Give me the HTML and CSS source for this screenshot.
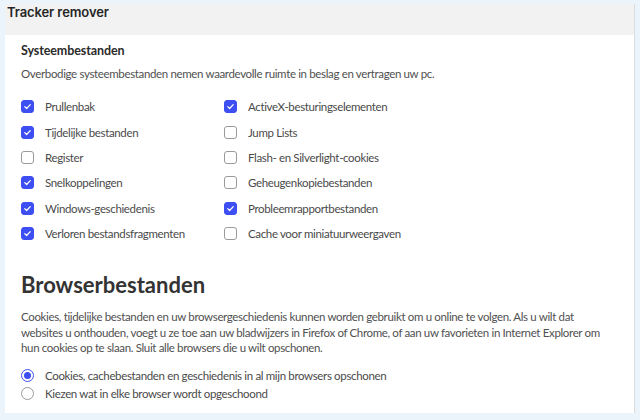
FILE: index.html
```html
<!DOCTYPE html>
<html lang="nl">
<head>
<meta charset="utf-8">
<title>Tracker remover</title>
<link rel="stylesheet" href="styles.css">
</head>
<body>
<div class="panel">
  <div class="panel-header"><h1 class="panel-title">Tracker remover</h1></div>
  <div class="panel-body">
    <section class="group">
      <h2 class="group-title">Systeembestanden</h2>
      <p class="group-desc">Overbodige systeembestanden nemen waardevolle ruimte in beslag en vertragen uw pc.</p>
      <div class="check-grid">
        <label class="check"><span class="box on"><svg viewBox="0 0 14 14"><path d="M3.5 7.2l2.4 2.4 4.6-5"/></svg></span>Prullenbak</label>
        <label class="check"><span class="box on"><svg viewBox="0 0 14 14"><path d="M3.5 7.2l2.4 2.4 4.6-5"/></svg></span>ActiveX-besturingselementen</label>
        <label class="check"><span class="box on"><svg viewBox="0 0 14 14"><path d="M3.5 7.2l2.4 2.4 4.6-5"/></svg></span>Tijdelijke bestanden</label>
        <label class="check"><span class="box"></span>Jump Lists</label>
        <label class="check"><span class="box"></span>Register</label>
        <label class="check"><span class="box"></span>Flash- en Silverlight-cookies</label>
        <label class="check"><span class="box on"><svg viewBox="0 0 14 14"><path d="M3.5 7.2l2.4 2.4 4.6-5"/></svg></span>Snelkoppelingen</label>
        <label class="check"><span class="box"></span>Geheugenkopiebestanden</label>
        <label class="check"><span class="box on"><svg viewBox="0 0 14 14"><path d="M3.5 7.2l2.4 2.4 4.6-5"/></svg></span>Windows-geschiedenis</label>
        <label class="check"><span class="box on"><svg viewBox="0 0 14 14"><path d="M3.5 7.2l2.4 2.4 4.6-5"/></svg></span>Probleemrapportbestanden</label>
        <label class="check"><span class="box on"><svg viewBox="0 0 14 14"><path d="M3.5 7.2l2.4 2.4 4.6-5"/></svg></span>Verloren bestandsfragmenten</label>
        <label class="check"><span class="box"></span>Cache voor miniatuurweergaven</label>
      </div>
    </section>
    <section class="group browsers">
      <h2 class="big-title">Browserbestanden</h2>
      <p class="browser-desc">Cookies, tijdelijke bestanden en uw browsergeschiedenis kunnen worden gebruikt om u online te volgen. Als u wilt dat websites u onthouden, voegt u ze toe aan uw bladwijzers in Firefox of Chrome, of aan uw favorieten in Internet Explorer om hun cookies op te slaan. Sluit alle browsers die u wilt opschonen.</p>
      <div class="radio-list">
        <label class="radio"><span class="dot on"></span>Cookies, cachebestanden en geschiedenis in al mijn browsers opschonen</label>
        <label class="radio"><span class="dot"></span>Kiezen wat in elke browser wordt opgeschoond</label>
      </div>
    </section>
  </div>
</div>
</body>
</html>
```

FILE: styles.css
```css
html, body {
  margin: 0;
  padding: 0;
}

body {
  background: #ebf3fb;
  font-family: Lato, "Noto Sans", sans-serif;
  color: #4a4a4a;
  width: 640px;
  height: 420px;
  overflow: hidden;
}

.panel {
  margin: 4px 5px 0 5px;
  height: 409px;
  background: #ffffff;
  border-right: 1px solid #dcdcdc;
  box-sizing: border-box;
}

.panel-header {
  height: 31px;
  background: #f2f2f2;
  padding: 0 2px;
}

.panel-title {
  margin: 0;
  font-family: Inter, "Noto Sans", sans-serif;
  font-weight: 600;
  font-size: 13px;
  line-height: 16px;
  letter-spacing: -0.1px;
  color: #262626;
}

.panel-body {
  padding: 0 26px 0 16px;
}

.group-title {
  margin: 0;
  padding-top: 7px;
  font-size: 12.5px;
  line-height: 18px;
  font-weight: 700;
  letter-spacing: -0.1px;
  color: #2b2b2b;
}

.group-desc,
.browser-desc,
.check,
.radio {
  font-size: 11.5px;
  letter-spacing: -0.35px;
}

.group-desc {
  margin: 6px 0 0;
  line-height: 16px;
  color: #505050;
}

.check-grid {
  display: grid;
  grid-template-columns: 203px 1fr;
  grid-auto-rows: 25.4px;
  margin-top: 12px;
}

.check {
  display: flex;
  align-items: center;
  gap: 11px;
  color: #4a4a4a;
}

.box {
  width: 13px;
  height: 13px;
  box-sizing: border-box;
  border: 1px solid #9a9a9a;
  border-radius: 3px;
  flex: none;
  display: flex;
  align-items: center;
  justify-content: center;
}

.box.on {
  background: #3d4ef2;
  border-color: #3d4ef2;
}

.box svg {
  width: 13px;
  height: 13px;
  fill: none;
  stroke: #ffffff;
  stroke-width: 1.6;
  stroke-linecap: round;
  stroke-linejoin: round;
}

.browsers {
  margin-top: 25px;
}

.big-title {
  margin: 0;
  font-size: 22px;
  line-height: 28px;
  font-weight: 700;
  color: #333333;
}

.browser-desc {
  margin: 10px 0 0;
  line-height: 15.5px;
  color: #505050;
}

.radio-list {
  margin-top: 11px;
  display: flex;
  flex-direction: column;
}

.radio {
  display: flex;
  align-items: center;
  gap: 11px;
  height: 18px;
  color: #4a4a4a;
}

.dot {
  width: 13px;
  height: 13px;
  box-sizing: border-box;
  border: 1px solid #9a9a9a;
  border-radius: 50%;
  flex: none;
  display: flex;
  align-items: center;
  justify-content: center;
}

.dot.on {
  border-color: #3d4ef2;
}

.dot.on::after {
  content: "";
  width: 7px;
  height: 7px;
  border-radius: 50%;
  background: #3d4ef2;
}
```
